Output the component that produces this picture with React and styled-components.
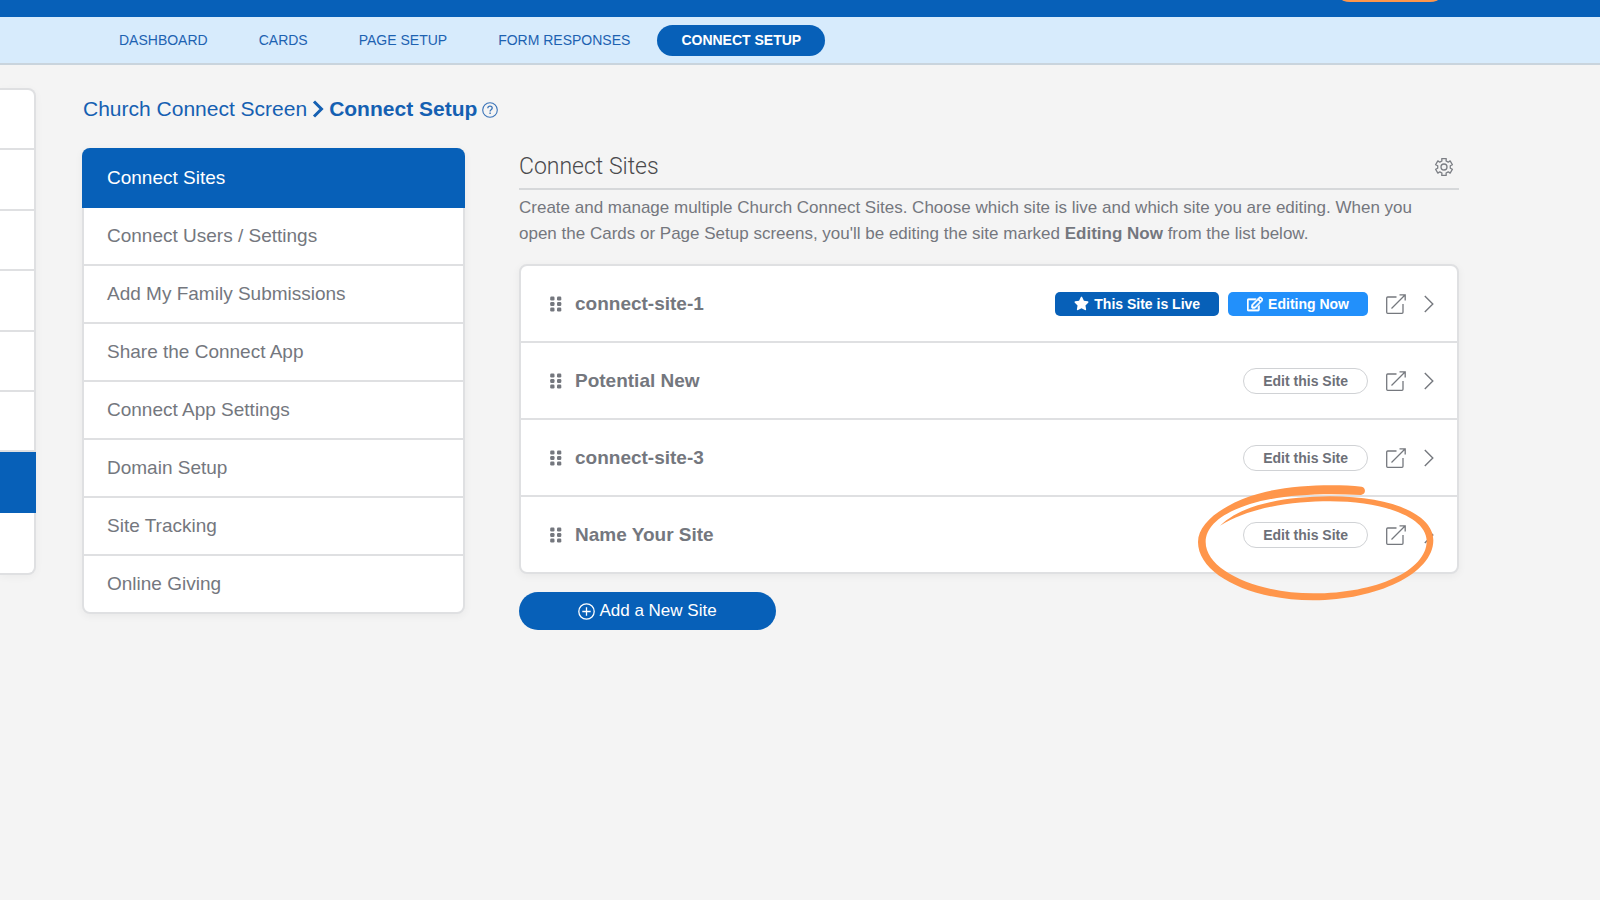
import { useState } from "react";
import styled, { createGlobalStyle } from "styled-components";
import { FaRegEdit, FaStar } from "react-icons/fa";

const GlobalStyle = createGlobalStyle`
  * {
    box-sizing: border-box;
  }

  body {
    margin: 0;
    background-color: #f4f4f4;
    color: #74777e;
    font-family: "Liberation Sans", Arial, sans-serif;
    overflow-x: hidden;
  }

  button {
    font-family: inherit;
    cursor: pointer;
  }

  a {
    color: inherit;
    text-decoration: none;
  }

  ul {
    list-style: none;
    margin: 0;
    padding: 0;
  }
`;

const TopBar = styled.header`
  display: flex;
  align-items: flex-end;
  justify-content: flex-end;
  height: 17px;
  padding: 0 152px 15px;
  overflow: hidden;
  background-color: #0760b8;
`;

const AccountButton = styled.button`
  flex-shrink: 0;
  width: 116px;
  height: 36px;
  border: none;
  border-radius: 18px;
  background-color: #ff964b;
`;

const SubNav = styled.nav`
  display: flex;
  align-items: center;
  gap: 3px;
  height: 48px;
  padding: 0 95px;
  background-color: #d7ebfc;
  border-bottom: 2px solid #c9d4dd;
`;

const SubNavLink = styled.a`
  padding: 0 24px;
  border-radius: 16px;
  font-size: 14px;
  line-height: 31px;
  color: #1d62b1;
  text-transform: uppercase;
  white-space: nowrap;

  &.active {
    background-color: #0760b8;
    color: #fff;
    font-weight: 700;
  }
`;

const Page = styled.div`
  display: flex;
  align-items: flex-start;
  gap: 46px;
  padding-right: 141px;
`;

const Rail = styled.ul`
  display: grid;
  grid-auto-rows: 1fr;
  flex: 0 0 36px;
  min-height: 487px;
  margin-top: 23px;
  background-color: #fff;
  border: 2px solid #dfe0e2;
  border-left: none;
  border-radius: 0 8px 8px 0;
  box-shadow: 0 2px 8px rgba(0, 0, 0, 0.04);
`;

const RailItem = styled.li`
  border-bottom: 2px solid #dfe0e2;

  &:last-child {
    border-bottom: none;
  }

  &.active {
    margin-right: -2px;
    background-color: #0760b8;
    border-color: #0760b8;
  }
`;

const RailLink = styled.a`
  display: block;
  height: 100%;
`;

const Content = styled.div`
  flex: 1;
  min-width: 0;
`;

const Breadcrumb = styled.h1`
  display: flex;
  align-items: center;
  gap: 5px;
  margin: 30px 0 25px 1px;
  font-size: 21px;
  line-height: 28px;
  font-weight: 400;
  color: #1560b2;
`;

const HelpButton = styled.button`
  display: flex;
  padding: 2px 0 0;
  border: none;
  background-color: transparent;
  color: #3a73b8;
`;

const Columns = styled.div`
  display: flex;
  align-items: flex-start;
  gap: 54px;
`;

const Menu = styled.ul`
  flex: 0 0 383px;
  background-color: #fff;
  border: 2px solid #dfe0e2;
  border-radius: 8px;
  box-shadow: 0 2px 8px rgba(0, 0, 0, 0.05);
`;

const MenuItem = styled.li`
  border-bottom: 2px solid #dfe0e2;

  &:last-child {
    border-bottom: none;
  }

  &.active {
    margin: -2px -2px 0;
    padding: 2px 2px 0;
    border-color: #0760b8;
    background-color: #0760b8;
    color: #fff;
  }

  &.active:first-child {
    border-radius: 8px 8px 0 0;
  }
`;

const MenuLink = styled.a`
  display: block;
  padding: 0 23px;
  font-size: 19px;
  line-height: 56px;
`;

const Main = styled.main`
  flex: 1;
  min-width: 0;
`;

const SectionHeader = styled.div`
  display: flex;
  align-items: center;
  justify-content: space-between;
  height: 42px;
  padding: 0 5px 2px 0;
  border-bottom: 2px solid #d6d8da;
`;

const SectionTitle = styled.h2`
  margin: 0;
  font-family: Roboto, "Liberation Sans", sans-serif;
  font-size: 23px;
  line-height: 36px;
  font-weight: 300;
  color: #4a4a4c;
`;

const IconButton = styled.button`
  display: flex;
  padding: 0;
  border: none;
  background-color: transparent;
  color: #7b7e84;
`;

const Description = styled.p`
  margin: 5px 0 17px;
  padding-right: 30px;
  font-size: 17px;
  line-height: 26px;
`;

const SiteList = styled.ul`
  background-color: #fff;
  border: 2px solid #dfe0e2;
  border-radius: 8px;
  box-shadow: 0 2px 8px rgba(0, 0, 0, 0.05);
`;

const SiteRow = styled.li`
  position: relative;
  display: flex;
  align-items: center;
  height: 77px;
  padding: 0 23px 0 29px;
  border-bottom: 2px solid #dfe0e2;

  &:last-child {
    height: 75px;
    border-bottom: none;
  }
`;

const SiteName = styled.span`
  flex: 1;
  margin-left: 13px;
  font-size: 19px;
  font-weight: 700;
`;

const Badge = styled.span`
  display: flex;
  align-items: center;
  gap: 5px;
  height: 24px;
  margin-left: 9px;
  padding: 0 19px;
  border-radius: 5px;
  background-color: ${({ $color }) => $color};
  color: #fff;
  font-size: 14px;
  font-weight: 700;
`;

const EditButton = styled.button`
  height: 26px;
  padding: 0 19px;
  border: 1px solid #d0d2d5;
  border-radius: 13px;
  background-color: #fff;
  color: #6d7078;
  font-size: 14px;
  font-weight: 700;
`;

const RowLink = styled.a`
  display: flex;
  margin-left: 18px;
  color: #75787e;
`;

const Highlight = styled.svg`
  position: absolute;
  top: -12px;
  right: 23px;
  pointer-events: none;
`;

const AddButton = styled.button`
  display: flex;
  align-items: center;
  justify-content: center;
  gap: 4px;
  width: 257px;
  height: 38px;
  margin-top: 18px;
  border: none;
  border-radius: 19px;
  background-color: #0760b8;
  color: #fff;
  font-size: 17px;
`;

const ChevronBold = () => (
  <svg width="12" height="18" viewBox="0 0 12 18" fill="none">
    <path d="M2 1.5 9.5 9 2 16.5" stroke="currentColor" strokeWidth="3" />
  </svg>
);

const HelpIcon = () => (
  <svg width="16" height="16" viewBox="0 0 16 16" fill="none" stroke="currentColor">
    <circle cx="8" cy="8" r="7.3" strokeWidth="1.1" />
    <path d="M5.8 6.2c.1-1.3 1-2 2.2-2s2.2.7 2.2 1.9c0 1.7-2.1 1.7-2.1 3.3" strokeWidth="1.3" />
    <path d="M8.1 10.6v1.4" strokeWidth="1.4" />
  </svg>
);

// six teeth, each one a pair of outer points between two inner points
const gearPoints = [0, 60, 120, 180, 240, 300]
  .flatMap((tooth) => [
    [tooth - 19, 6.4],
    [tooth - 15, 8.7],
    [tooth + 15, 8.7],
    [tooth + 19, 6.4],
  ])
  .map(([angle, radius]) => {
    const rad = (angle * Math.PI) / 180;
    return `${10 + radius * Math.sin(rad)},${10 - radius * Math.cos(rad)}`;
  })
  .join(" ");

const GearIcon = () => (
  <svg width="20" height="20" viewBox="0 0 20 20" fill="none" stroke="currentColor" strokeWidth="1.3">
    <polygon points={gearPoints} strokeLinejoin="round" />
    <circle cx="10" cy="10" r="3" />
  </svg>
);

const DragIcon = () => (
  <svg width="12" height="16" viewBox="0 0 12 16" fill="currentColor">
    {[0.5, 6, 11.5].map((y) => (
      <g key={y}>
        <rect x="0.2" y={y} width="4.3" height="4" rx="1.2" />
        <rect x="7" y={y} width="4.3" height="4" rx="1.2" />
      </g>
    ))}
  </svg>
);

const ExternalIcon = () => (
  <svg width="20" height="20" viewBox="0 0 20 20" fill="none" stroke="currentColor" strokeWidth="1.3">
    <path d="M10.5 3H1.7a1 1 0 0 0-1 1v14.3a1 1 0 0 0 1 1h14.300a1 1 0 0 0 1-1V10" />
    <path d="M5.5 14.5 19 1M13.500.8h5.700v5.700" />
  </svg>
);

const ChevronThin = () => (
  <svg width="10" height="18" viewBox="0 0 10 18" fill="none" stroke="currentColor" strokeWidth="1.4">
    <path d="M.8 1 8.8 9l-8 8" />
  </svg>
);

const PlusCircle = () => (
  <svg width="17" height="17" viewBox="0 0 17 17" fill="none" stroke="currentColor" strokeWidth="1.3">
    <circle cx="8.5" cy="8.5" r="7.7" />
    <path d="M8.5 4.3v8.4M4.3 8.500h8.400" />
  </svg>
);

const HighlightMark = () => (
  <Highlight width="236" height="116" viewBox="84 44 708 348" fill="#ff964b">
    <path d="M575 49C480 40 330 45 240 78C150 110 84 160 84 215C84 312 240 390 430 390C620 390 790 310 790 210C790 130 660 78 480 78C340 80 220 100 150 166C240 110 370 93 480 93C640 93 768 140 770 210C772 300 620 369 430 369C260 369 107 300 107 215C107 170 150 130 240 101C330 74 440 68 573 74C589 72 588 52 575 49Z" />
  </Highlight>
);

const tabs = ["Dashboard", "Cards", "Page Setup", "Form Responses", "Connect Setup"];

const railItems = [1, 2, 3, 4, 5, 6, 7, 8];

const menuItems = [
  "Connect Sites",
  "Connect Users / Settings",
  "Add My Family Submissions",
  "Share the Connect App",
  "Connect App Settings",
  "Domain Setup",
  "Site Tracking",
  "Online Giving",
];

const sites = [
  { name: "connect-site-1", live: true },
  { name: "Potential New" },
  { name: "connect-site-3" },
  { name: "Name Your Site", highlighted: true },
];

const App = () => {
  const [activeMenu, setActiveMenu] = useState("Connect Sites");
  const [editing, setEditing] = useState("connect-site-1");

  return (
    <>
      <GlobalStyle />
      <TopBar>
        <AccountButton aria-label="Account" />
      </TopBar>
      <SubNav>
        {tabs.map((tab) => (
          <SubNavLink key={tab} href="#" className={tab === "Connect Setup" ? "active" : ""}>
            {tab}
          </SubNavLink>
        ))}
      </SubNav>
      <Page>
        <Rail>
          {railItems.map((item) => (
            <RailItem key={item} className={item === 7 ? "active" : ""}>
              <RailLink href="#" aria-label={`Section ${item}`} />
            </RailItem>
          ))}
        </Rail>
        <Content>
          <Breadcrumb>
            <a href="#">Church Connect Screen</a>
            <ChevronBold />
            <strong>Connect Setup</strong>
            <HelpButton aria-label="Help">
              <HelpIcon />
            </HelpButton>
          </Breadcrumb>
          <Columns>
            <Menu>
              {menuItems.map((item) => (
                <MenuItem key={item} className={item === activeMenu ? "active" : ""}>
                  <MenuLink href="#" onClick={() => setActiveMenu(item)}>
                    {item}
                  </MenuLink>
                </MenuItem>
              ))}
            </Menu>
            <Main>
              <SectionHeader>
                <SectionTitle>Connect Sites</SectionTitle>
                <IconButton aria-label="Settings">
                  <GearIcon />
                </IconButton>
              </SectionHeader>
              <Description>
                Create and manage multiple Church Connect Sites. Choose which site is live and which
                site you are editing. When you open the Cards or Page Setup screens, you'll be editing
                the site marked <strong>Editing Now</strong> from the list below.
              </Description>
              <SiteList>
                {sites.map(({ name, live, highlighted }) => (
                  <SiteRow key={name}>
                    <DragIcon />
                    <SiteName>{name}</SiteName>
                    {live && (
                      <Badge $color="#0760b8">
                        <FaStar size={15} />
                        This Site is Live
                      </Badge>
                    )}
                    {editing === name ? (
                      <Badge $color="#2290fb">
                        <FaRegEdit size={16} stroke="currentColor" strokeWidth={24} />
                        Editing Now
                      </Badge>
                    ) : (
                      <EditButton onClick={() => setEditing(name)}>Edit this Site</EditButton>
                    )}
                    <RowLink href="#" aria-label={`Open ${name}`}>
                      <ExternalIcon />
                    </RowLink>
                    <RowLink href="#" aria-label={`${name} details`}>
                      <ChevronThin />
                    </RowLink>
                    {highlighted && <HighlightMark />}
                  </SiteRow>
                ))}
              </SiteList>
              <AddButton>
                <PlusCircle />
                Add a New Site
              </AddButton>
            </Main>
          </Columns>
        </Content>
      </Page>
    </>
  );
};

export default App;
